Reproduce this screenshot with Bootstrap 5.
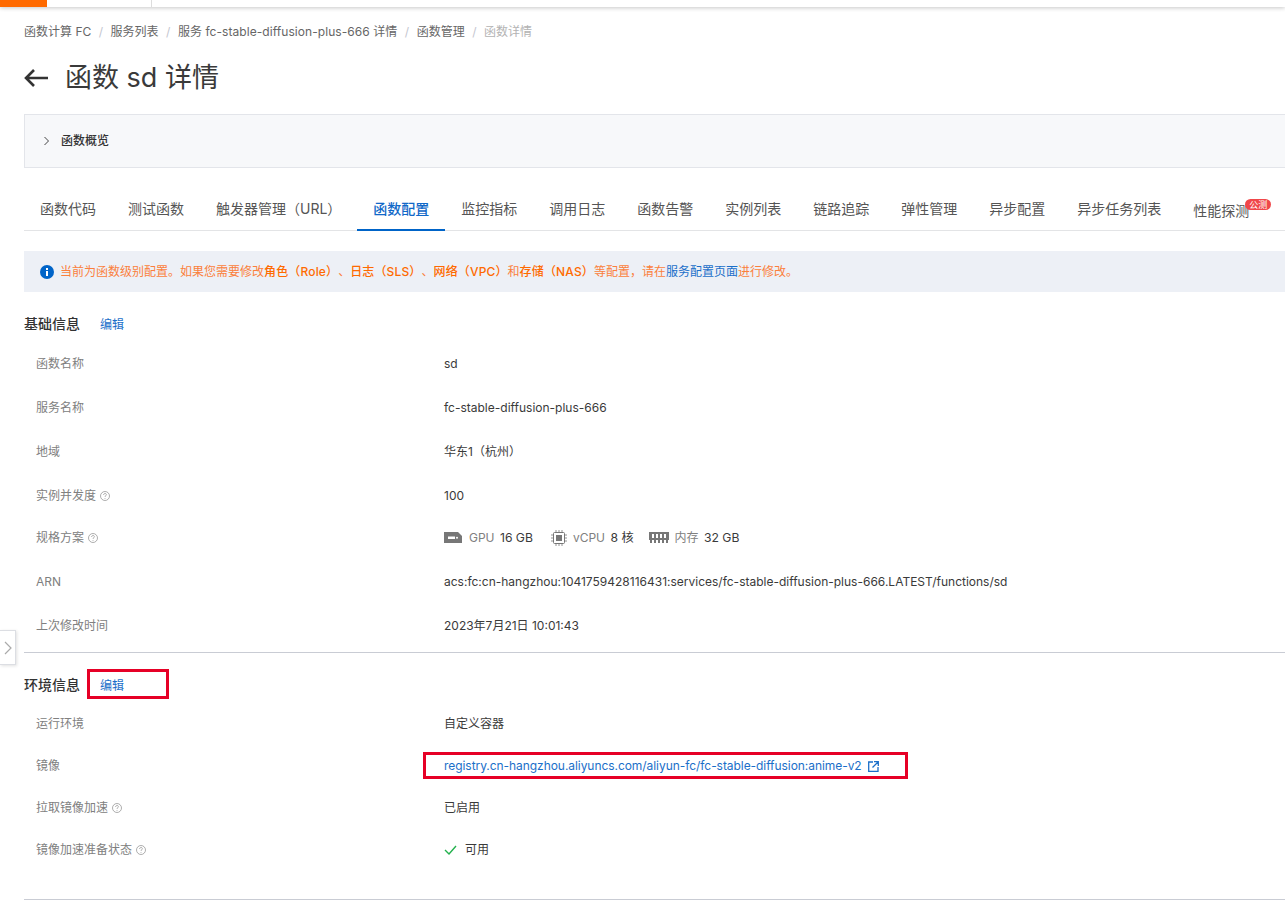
<!DOCTYPE html>
<html lang="zh-CN">
<head>
<meta charset="utf-8">
<title>函数 sd 详情</title>
<link href="https://cdn.jsdelivr.net/npm/bootstrap@5.3.0/dist/css/bootstrap.min.css" rel="stylesheet">
<style>
html,body{height:912px;overflow:hidden;background:#fff}
body{font-family:Inter,"Noto Sans CJK SC",sans-serif;font-size:12px;color:#333;position:relative;text-spacing-trim:space-all}
.topstrip{height:7px;background:#fff;box-shadow:0 1px 4px rgba(0,0,0,.22);position:relative}
.topbrand{width:47px;height:7px;background:#ff6a00}
.topsep{width:1px;height:7px;background:#ddd;margin-left:104px}
.pagewrap{padding:0 0 0 24px;width:1320px}
.crumbs{height:16px;margin-top:17px;font-size:12px;line-height:16px;color:#666}
.crumbs .sep{color:#c4c6cf;margin:0 7.500px}
.crumbs .cur{color:#b3b3b3}
.crumbs .longname{letter-spacing:.06px}
.titleline{margin-top:17px;height:42px;font-size:27px;line-height:42px;color:#3a3a3a;font-weight:400}
.backarrow{width:24px;height:20px;margin-right:17px}
.overview{margin-top:15px;height:54px;background:#f7f8fa;border:1px solid #e3e5ea;padding-left:18px;font-size:12px;font-weight:500;color:#333}
.overview svg{margin-right:11px}
.tabrow{margin-top:21px;height:42px;border-bottom:1px solid #e3e4e6;font-size:14px;color:#555;width:1261px}
.tabitem{padding:0 16px;height:42px;line-height:40px;white-space:nowrap;position:relative}
.tabitem.on{color:#1068c8;font-weight:500;border-bottom:2px solid #0064c8}
.tabitem.probe{line-height:44px}
.betamark{position:absolute;left:68px;top:10px;height:11px;padding:0 4px;border-radius:6px;background:#f0474a;color:#fff;font-size:9px;line-height:11px}
.tipbar{margin-top:20px;height:41px;background:#edf0f6;padding-left:16px;color:#fb7f3c;font-size:12px;width:1261px}
.tipbar svg{margin-right:6px}
.tipbar b{font-weight:500;color:#ff6a00;letter-spacing:.15px}
.tipbar a,.cellv a{color:#1b6fc9;text-decoration:none}
.secthead{font-size:14px;font-weight:500;color:#333;line-height:18px}
.secthead a{font-size:12px;font-weight:400;color:#1b6fc9;text-decoration:none}
.sa{margin-top:23px;height:18px}
.sa a{margin-left:20px;padding-top:2px}
.sb{margin-top:16px;height:30px}
.sb span{padding-top:2px}
.sb a{margin-left:7px;width:82px;height:30px;border:3px solid #e60026;padding:2px 0 0 10px;line-height:23px;display:block}
.inforow{display:flex;align-items:center;height:44px;padding-left:12px}
.inforow.tight{height:42px}
.inforow.lifted{padding-bottom:2px}
.cellk{width:408px;color:#808080;flex:none}
.cellv{color:#3a3a3a}
.infoblock{margin-top:9px}
.infoblock.second{margin-top:4px}
.qmark{display:inline-block;width:10px;height:10px;margin-left:4px;vertical-align:-1px}
.spec{color:#808080}
.spec b{font-weight:400;color:#3a3a3a;margin-left:2px;font-size:12.200px}
.specgpu{margin-right:7px}
.specchip{margin-left:18px;margin-right:6px}
.specram{margin-left:15px;margin-right:6px}
.linkbox{display:flex;align-items:center;width:485px;height:27px;margin-left:-21px;margin-top:-2px;border:3px solid #e60026;padding:2px 0 0 18px;letter-spacing:-.055px}
.linkbox svg{margin-left:6px}
.rule{border:0;height:1px;background:#c9ccd4;opacity:1;margin:0;width:1261px}
.ra{margin-top:4px}
.rb{margin-top:28px}
.sidegrip{position:absolute;left:0;top:630px;width:16px;height:35px;background:#fff;border:1px solid #dcdee3;border-left:0;box-shadow:1px 1px 3px rgba(0,0,0,.12)}
</style>
</head>
<body>
<div class="topstrip d-flex"><div class="topbrand"></div><div class="topsep"></div></div>
<div class="pagewrap">
  <div class="crumbs d-flex text-nowrap">
    <span>函数计算 FC</span><span class="sep">/</span><span>服务列表</span><span class="sep">/</span><span class="longname">服务 fc-stable-diffusion-plus-666 详情</span><span class="sep">/</span><span>函数管理</span><span class="sep">/</span><span class="cur">函数详情</span>
  </div>
  <div class="titleline d-flex align-items-center">
    <svg class="backarrow" viewBox="0 0 24 20" fill="none" stroke="#333" stroke-width="2.6"><path d="M24 10H2M10 2l-8 8 8 8"/></svg>
    <span>函数 sd 详情</span>
  </div>
  <div class="overview d-flex align-items-center">
    <svg width="7" height="10" viewBox="0 0 7 10" fill="none" stroke="#444" stroke-width="1"><path d="M1.500 1l4 4-4 4"/></svg>
    <span>函数概览</span>
  </div>
  <div class="tabrow d-flex">
    <div class="tabitem">函数代码</div>
    <div class="tabitem">测试函数</div>
    <div class="tabitem">触发器管理（URL）</div>
    <div class="tabitem on">函数配置</div>
    <div class="tabitem">监控指标</div>
    <div class="tabitem">调用日志</div>
    <div class="tabitem">函数告警</div>
    <div class="tabitem">实例列表</div>
    <div class="tabitem">链路追踪</div>
    <div class="tabitem">弹性管理</div>
    <div class="tabitem">异步配置</div>
    <div class="tabitem">异步任务列表</div>
    <div class="tabitem probe">性能探测<span class="betamark">公测</span></div>
  </div>
  <div class="tipbar d-flex align-items-center text-nowrap">
    <svg width="14" height="14" viewBox="0 0 14 14"><circle cx="7" cy="7" r="7" fill="#0064c8"/><rect x="6" y="6" width="2" height="5" fill="#fff"/><rect x="6" y="3" width="2" height="2" fill="#fff"/></svg>
    <span>当前为函数级别配置。如果您需要修改<b>角色（Role）</b>、<b>日志（SLS）</b>、<b>网络（VPC）</b>和<b>存储（NAS）</b>等配置，请在<a href="#">服务配置页面</a>进行修改。</span>
  </div>

  <div class="secthead sa d-flex align-items-center"><span>基础信息</span><a href="#">编辑</a></div>
  <div class="infoblock">
    <div class="inforow"><div class="cellk">函数名称</div><div class="cellv">sd</div></div>
    <div class="inforow"><div class="cellk">服务名称</div><div class="cellv">fc-stable-diffusion-plus-666</div></div>
    <div class="inforow"><div class="cellk">地域</div><div class="cellv">华东1（杭州）</div></div>
    <div class="inforow"><div class="cellk">实例并发度<svg class="qmark" viewBox="0 0 10 10" fill="none" stroke="#999" stroke-width=".8"><circle cx="5" cy="5" r="4.500"/><path d="M3.600 4c0-2 2.800-2 2.800-.3 0 1-1.400 1-1.400 2.200M5 7v.8"/></svg></div><div class="cellv">100</div></div>
    <div class="inforow tight lifted"><div class="cellk">规格方案<svg class="qmark" viewBox="0 0 10 10" fill="none" stroke="#999" stroke-width=".8"><circle cx="5" cy="5" r="4.500"/><path d="M3.600 4c0-2 2.800-2 2.800-.3 0 1-1.400 1-1.400 2.200M5 7v.8"/></svg></div>
      <div class="cellv spec d-flex align-items-center">
        <svg class="specgpu" width="18" height="11" viewBox="0 0 18 11"><path d="M0 0h14l4 4v7H0z" fill="#777"/><rect x="4" y="4.500" width="7" height="2.500" fill="#fff"/><circle cx="13" cy="5.700" r="1" fill="#fff"/></svg><span>GPU <b>16 GB</b></span>
        <svg class="specchip" width="16" height="16" viewBox="0 0 16 16" fill="none" stroke="#777"><rect x="2.500" y="2.500" width="11" height="11" rx="1"/><rect x="5" y="5" width="6" height="6" fill="#777" stroke="none"/><path d="M5 0v2M8 0v2M11 0v2M5 14v2M8 14v2M11 14v2M0 5h2M0 8h2M0 11h2M14 5h2M14 8h2M14 11h2" stroke-width=".8"/></svg><span>vCPU <b>8 核</b></span>
        <svg class="specram" width="20" height="11" viewBox="0 0 20 11"><rect x="0" y="0" width="20" height="8" fill="#777"/><path d="M3 2h2v4H3zM7 2h2v4H7zM11 2h2v4h-2zM15 2h2v4h-2z" fill="#fff"/><path d="M1 8h2v3H1zM5 8h2v3H5zM9 8h2v3H9zM13 8h2v3h-2zM17 8h2v3h-2z" fill="#777"/></svg><span>内存 <b>32 GB</b></span>
      </div></div>
    <div class="inforow"><div class="cellk">ARN</div><div class="cellv">acs:fc:cn-hangzhou:1041759428116431:services/fc-stable-diffusion-plus-666.LATEST/functions/sd</div></div>
    <div class="inforow"><div class="cellk">上次修改时间</div><div class="cellv">2023年7月21日 10:01:43</div></div>
  </div>
  <hr class="rule ra">

  <div class="secthead sb d-flex align-items-center"><span>环境信息</span><a href="#">编辑</a></div>
  <div class="infoblock second">
    <div class="inforow tight"><div class="cellk">运行环境</div><div class="cellv">自定义容器</div></div>
    <div class="inforow tight"><div class="cellk">镜像</div><div class="cellv"><a class="linkbox" href="#">registry.cn-hangzhou.aliyuncs.com/aliyun-fc/fc-stable-diffusion:anime-v2<svg width="11" height="11" viewBox="0 0 11 11" fill="none" stroke="#1b6fc9" stroke-width="1.300"><path d="M5 1H.7v9.300H10V6M6 .7h4.300V5M10 1 4.500 6.500"/></svg></a></div></div>
    <div class="inforow tight"><div class="cellk">拉取镜像加速<svg class="qmark" viewBox="0 0 10 10" fill="none" stroke="#999" stroke-width=".8"><circle cx="5" cy="5" r="4.500"/><path d="M3.600 4c0-2 2.800-2 2.800-.3 0 1-1.400 1-1.400 2.200M5 7v.8"/></svg></div><div class="cellv">已启用</div></div>
    <div class="inforow tight"><div class="cellk">镜像加速准备状态<svg class="qmark" viewBox="0 0 10 10" fill="none" stroke="#999" stroke-width=".8"><circle cx="5" cy="5" r="4.500"/><path d="M3.600 4c0-2 2.800-2 2.800-.3 0 1-1.400 1-1.400 2.200M5 7v.8"/></svg></div><div class="cellv d-flex align-items-center"><svg class="me-2" width="13" height="10" viewBox="0 0 13 10" fill="none" stroke="#23b14d" stroke-width="1.400"><path d="M1 5l4 4 7-8"/></svg>可用</div></div>
  </div>
  <hr class="rule rb">
</div>
<div class="sidegrip d-flex align-items-center justify-content-center"><svg width="8" height="14" viewBox="0 0 8 14" fill="none" stroke="#aaa" stroke-width="1.200"><path d="M1 1l6 6-6 6"/></svg></div>
</body>
</html>
